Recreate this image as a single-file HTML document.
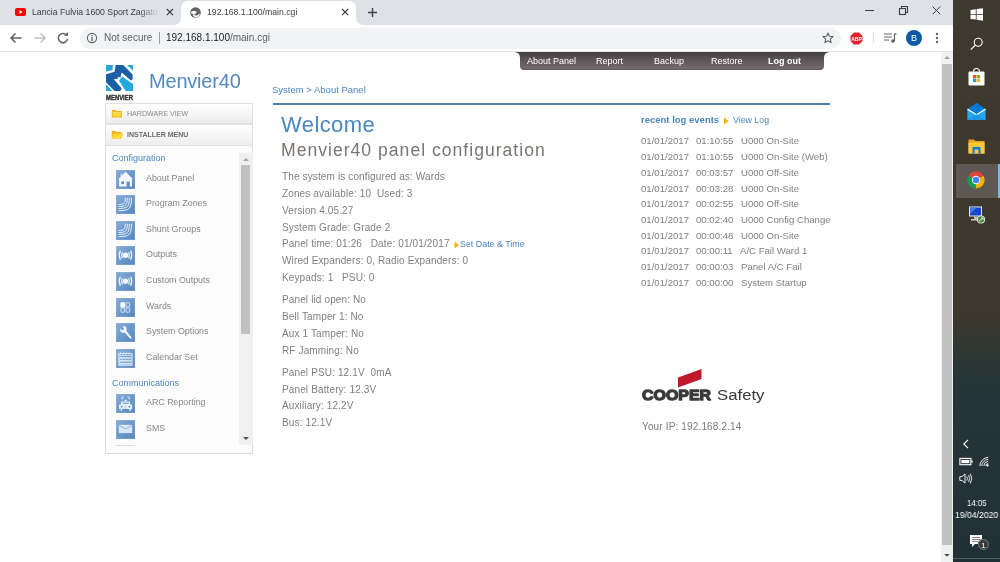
<!DOCTYPE html>
<html><head><meta charset="utf-8">
<style>
*{margin:0;padding:0;box-sizing:border-box}
html,body{width:1000px;height:562px;overflow:hidden;background:#fff;font-family:"Liberation Sans",sans-serif;-webkit-font-smoothing:antialiased}
.a{position:absolute;white-space:pre;will-change:transform}
#tabs{position:absolute;left:0;top:0;width:953px;height:25px;background:#dee1e6}
#toolbar{position:absolute;left:0;top:25px;width:953px;height:26px;background:#fff}
#tbline{position:absolute;left:0;top:51px;width:953px;height:1px;background:#e3e3e3}
#omni{position:absolute;left:80px;top:28px;width:761px;height:20.5px;border-radius:10.25px;background:#f1f3f4}
#taskbar{position:absolute;left:953px;top:0;width:47px;height:562px;background:linear-gradient(to bottom,#3f382e 0px,#3d372d 310px,#2f3733 350px,#253538 385px,#203035 562px)}
#vscroll{position:absolute;left:941px;top:52px;width:12px;height:510px;background:#f1f1f1}
.txt{color:#808080;font-size:10px;letter-spacing:0.13px}
.nav{color:#fff;font-size:9px;top:55.5px}
.side{color:#858585;font-size:8.85px}
.ico{position:absolute;left:116px;width:20px;height:19px;background:linear-gradient(135deg,#6f9fd0 0%,#5a8cc2 60%,#4a7fb8 100%)}
.log{color:#808080;font-size:9.6px}
</style></head><body>
<!-- ===== Chrome tab strip ===== -->
<div id="tabs"></div>
<!-- active tab -->
<div style="position:absolute;left:181px;top:1px;width:175px;height:25px;background:#fff;border-radius:7px 7px 0 0"></div>
<svg class="a" style="left:0;top:0" width="953" height="26">
  <path d="M173 25 Q181 25 181 17 L181 25 Z" fill="#fff"/>
  <path d="M364 25 Q356 25 356 17 L356 25 Z" fill="#fff"/>
</svg>
<!-- youtube icon -->
<div class="a" style="left:15px;top:8px;width:11px;height:8px;background:#f00;border-radius:2px"></div>
<svg class="a" style="left:15px;top:8px" width="11" height="8"><path d="M4.5 2 L7.5 4 L4.5 6 Z" fill="#fff"/></svg>
<div class="a" style="left:32px;top:6.5px;width:127px;overflow:hidden;font-size:8.7px;color:#3c4043;-webkit-mask-image:linear-gradient(to right,#000 85%,transparent)">Lancia Fulvia 1600 Sport Zagato.</div>
<svg class="a" style="left:166px;top:8px" width="8" height="8"><path d="M0.8 1 L7 7.2 M7 1 L0.8 7.2" stroke="#3c4043" stroke-width="1.2"/></svg>
<!-- globe -->
<svg class="a" style="left:190px;top:7px" width="11" height="11" viewBox="0 0 11 11"><circle cx="5.5" cy="5.5" r="5.3" fill="#5f6368"/><path d="M1 5.2 Q2.5 3.6 4.6 3.9 Q6.8 4.2 6.6 5.6 Q6.3 6.6 5 6.7 Q3.9 6.9 4.6 7.9 Q5.6 8.9 7.4 8.2 Q8.8 7.5 9.9 6.6 Q9.8 8.9 7.6 10.1 Q5.2 10.9 3.8 9.6 Q2.6 8.4 3.2 7 Q2.2 6.5 1 6.2 Z" fill="#fff"/></svg>
<div class="a" style="left:207px;top:6.5px;font-size:8.7px;color:#3c4043">192.168.1.100/main.cgi</div>
<svg class="a" style="left:341px;top:8px" width="8" height="8"><path d="M1 1 L7.2 7.2 M7.2 1 L1 7.2" stroke="#3c4043" stroke-width="1.2"/></svg>
<svg class="a" style="left:367px;top:7px" width="11" height="11"><path d="M5.5 1 V10 M1 5.5 H10" stroke="#3c4043" stroke-width="1.4"/></svg>
<!-- window controls -->
<div class="a" style="left:865px;top:10px;width:9px;height:1px;background:#3c4043"></div>
<svg class="a" style="left:898px;top:5px" width="11" height="11"><rect x="1.5" y="3.5" width="6" height="6" fill="none" stroke="#3c4043" stroke-width="1.1"/><path d="M3.5 3.5 V1.5 H9.5 V7.5 H7.5" fill="none" stroke="#3c4043" stroke-width="1.1"/></svg>
<svg class="a" style="left:932px;top:6px" width="9" height="9"><path d="M0.5 0.5 L8.3 8.3 M8.3 0.5 L0.5 8.3" stroke="#3c4043" stroke-width="1"/></svg>

<!-- ===== toolbar ===== -->
<div id="toolbar"></div>
<div id="tbline"></div>
<svg class="a" style="left:9px;top:32px" width="14" height="12"><path d="M12.5 6 H2 M6.5 1.5 L2 6 L6.5 10.5" fill="none" stroke="#5f6368" stroke-width="1.5"/></svg>
<svg class="a" style="left:33px;top:32px" width="14" height="12"><path d="M1.5 6 H12 M7.5 1.5 L12 6 L7.5 10.5" fill="none" stroke="#bdc1c6" stroke-width="1.5"/></svg>
<svg class="a" style="left:57px;top:32px" width="12" height="12"><path d="M9.8 3.5 A4.6 4.6 0 1 0 10.5 7" fill="none" stroke="#5f6368" stroke-width="1.5"/><path d="M7 3.8 L11 3.8 L11 0 Z" fill="#5f6368"/></svg>
<div id="omni"></div>
<svg class="a" style="left:86px;top:32px" width="12" height="12"><circle cx="6" cy="6" r="4.6" fill="none" stroke="#5f6368" stroke-width="1.1"/><rect x="5.4" y="5" width="1.3" height="4" fill="#5f6368"/><rect x="5.4" y="3" width="1.3" height="1.2" fill="#5f6368"/></svg>
<div class="a" style="left:104px;top:32px;font-size:10px;color:#5f6368">Not secure</div>
<div class="a" style="left:159px;top:32px;width:1px;height:12px;background:#9aa0a6"></div>
<div class="a" style="left:166px;top:32px;font-size:10px;color:#202124">192.168.1.100<span style="color:#5f6368">/main.cgi</span></div>
<svg class="a" style="left:822px;top:32px" width="12" height="12"><path d="M6 1 L7.4 4.3 L11 4.6 L8.3 7 L9.1 10.6 L6 8.7 L2.9 10.6 L3.7 7 L1 4.6 L4.6 4.3 Z" fill="none" stroke="#5f6368" stroke-width="1.1" stroke-linejoin="round"/></svg>
<svg class="a" style="left:850px;top:32px" width="13" height="13"><path d="M4 0.5 H9 L12.5 4 V9 L9 12.5 H4 L0.5 9 V4 Z" fill="#e0262c"/><text x="6.5" y="8.5" font-size="5" font-weight="bold" fill="#fff" text-anchor="middle" font-family="Liberation Sans">ABP</text></svg>
<div class="a" style="left:873px;top:33px;width:1px;height:10px;background:#dadce0"></div>
<svg class="a" style="left:884px;top:33px" width="13" height="10"><path d="M0 1 H8 M0 4 H8 M0 7 H5" stroke="#5f6368" stroke-width="1.2"/><path d="M10.5 0.5 V8 M10.5 0.8 L12.5 0.8" stroke="#5f6368" stroke-width="1.2"/><circle cx="9" cy="8" r="1.8" fill="#5f6368"/></svg>
<div class="a" style="left:905.5px;top:30px;width:16.2px;height:16.2px;border-radius:50%;background:#0f5aa6"></div>
<div class="a" style="left:910.5px;top:32.8px;font-size:9px;color:#fff">B</div>
<svg class="a" style="left:935px;top:32px" width="4" height="12"><circle cx="2" cy="2" r="1.2" fill="#5f6368"/><circle cx="2" cy="6" r="1.2" fill="#5f6368"/><circle cx="2" cy="10" r="1.2" fill="#5f6368"/></svg>


<!-- ===== PAGE ===== -->
<!-- top nav -->
<svg class="a" style="left:514px;top:51px" width="316" height="20">
  <defs><linearGradient id="ng" x1="0" y1="0" x2="0" y2="1"><stop offset="0" stop-color="#433c3e"/><stop offset="0.08" stop-color="#4a4345"/><stop offset="0.9" stop-color="#736a6b"/><stop offset="1" stop-color="#5f5759"/></linearGradient></defs>
  <path d="M0 1 Q6 1 6 7 L6 15 Q6 19 10 19 L306 19 Q310 19 310 15 L310 7 Q310 1 316 1 Z" fill="url(#ng)"/>
</svg>
<div class="a nav" style="left:527px">About Panel</div>
<div class="a nav" style="left:596px">Report</div>
<div class="a nav" style="left:654px">Backup</div>
<div class="a nav" style="left:711px">Restore</div>
<div class="a nav" style="left:768px;font-weight:bold">Log out</div>

<!-- logo -->
<svg class="a" style="left:106px;top:65px" width="27" height="26" viewBox="0 0 27 26">
  <g fill="#22a9de">
    <path d="M0 0 L7.1 0 L6.4 5.3 L0 6.4 Z"/>
    <path d="M21 0 L27 0 L27 5.8 Z"/>
    <path d="M0 19.3 L0 26 L6.4 26 Z"/>
    <path d="M13 15.4 L16.2 11.6 L27 19 L27 26 L19.6 26 Z"/>
  </g>
  <path d="M9.6 0 L17.2 0 L26.6 9.4 L26.6 14.2 L25 15.4 L15.6 7.4 L14.4 12.6 L11.6 11.8 L12.4 13.6 L7.8 14.2 L15.6 23.2 L15.2 25 L14 26 L8.6 26 L0 17.2 L0 9.3 L8.6 6.8 Z" fill="#1d5fa7"/>
</svg>
<svg class="a" style="left:105px;top:93px" width="29" height="8"><text x="1" y="6.7" font-size="6.6" font-weight="bold" fill="#2e2e2e" font-family="Liberation Sans" textLength="27" lengthAdjust="spacingAndGlyphs" stroke="#2e2e2e" stroke-width="0.35">MENVIER</text></svg>
<div class="a" style="left:148.5px;top:70px;font-size:20px;letter-spacing:-0.2px;color:#5089c4">Menvier40</div>

<!-- sidebar -->
<div class="a" style="left:105px;top:103px;width:148px;height:351px;border:1px solid #dcdcdc;background:#fcfcfc"></div>
<div class="a" style="left:105px;top:103px;width:148px;height:21px;border:1px solid #e0e0e0;background:linear-gradient(#ffffff,#ededed)"></div>
<div class="a" style="left:105px;top:124px;width:148px;height:22px;border:1px solid #e0e0e0;background:linear-gradient(#ffffff,#ededed)"></div>
<svg class="a" style="left:111px;top:109px" width="12" height="10"><defs><linearGradient id="fg" x1="0" y1="0" x2="0" y2="1"><stop offset="0" stop-color="#ffd866"/><stop offset="1" stop-color="#f9d11a"/></linearGradient></defs><path d="M0.8 1 H4.5 L5.5 2 H10.8 V8.6 H0.8 Z" fill="#f1ac1e"/><path d="M1.6 2.8 H10 V7.8 H1.6 Z" fill="url(#fg)"/><path d="M3 7.6 Q6 4.5 9.5 7.6 Z" fill="#f7e326" opacity="0.7"/></svg>
<div class="a" style="left:127px;top:109.5px;font-size:7.1px;color:#8a8a8a">HARDWARE VIEW</div>
<svg class="a" style="left:111px;top:130px" width="13" height="10"><path d="M0.8 1 H4.5 L5.5 2 H10.5 V8.6 H0.8 Z" fill="#f1ac1e"/><path d="M2.2 3.6 H12.3 L10.4 8.6 H0.8 Z" fill="#fcd53a"/><path d="M3 7.8 Q6 5 10 7.8 Z" fill="#f4ee36" opacity="0.8"/></svg>
<div class="a" style="left:127px;top:130.5px;font-size:7px;font-weight:bold;color:#6a6a6a">INSTALLER MENU</div>

<div class="a" style="left:238.5px;top:153px;width:13.5px;height:292px;background:#f0f0f0"></div>
<svg class="a" style="left:239.5px;top:153px" width="12" height="12"><path d="M3 8 L6 5 L9 8 Z" fill="#a3a3a3"/></svg>
<div class="a" style="left:241px;top:165px;width:9px;height:169px;background:#c1c1c1"></div>
<svg class="a" style="left:239.5px;top:433px" width="12" height="12"><path d="M3 4 L6 7 L9 4 Z" fill="#505050"/></svg>

<div class="a" style="left:112px;top:153px;font-size:9px;color:#4a86c0">Configuration</div>
<svg width="0" height="0" style="position:absolute"><defs><linearGradient id="ig" x1="0" y1="0" x2="1" y2="1"><stop offset="0" stop-color="#86add8"/><stop offset="0.5" stop-color="#6c99cb"/><stop offset="1" stop-color="#5585be"/></linearGradient></defs></svg>
<svg class="a" style="left:116.2px;top:169.6px" width="19.4" height="19.2" viewBox="0 0 19.4 19.2"><rect width="19.4" height="19.2" fill="url(#ig)"/><rect x="0.5" y="0.5" width="18.4" height="18.2" fill="none" stroke="#9fc0e3" stroke-width="0.6" opacity="0.5"/><path d="M9.6 1.8 L16.8 9 L16 9.8 L16 16.6 L13.9 16.6 L13.9 11.4 L10.6 11.4 L10.6 16.6 L3.1 16.6 L3.1 9.8 L2.4 9 L4.7 6.7 L4.7 3.5 L5.7 3.5 L5.7 5.7 Z" fill="#f4f8fc"/><rect x="5.3" y="11.4" width="2.7" height="2.7" fill="#5e8fc4"/></svg>
<div class="a side" style="left:146px;top:172.6px">About Panel</div>
<svg class="a" style="left:116.2px;top:195.2px" width="19.4" height="19.2" viewBox="0 0 19.4 19.2"><rect width="19.4" height="19.2" fill="url(#ig)"/><rect x="0.5" y="0.5" width="18.4" height="18.2" fill="none" stroke="#9fc0e3" stroke-width="0.6" opacity="0.5"/><g fill="none" stroke="#f4f8fc" stroke-width="1" opacity="0.9"><path d="M2.5 9.5 C 8.3 9.5 9.3 8.5 9.3 2.7"/><path d="M2.5 11.5 C 10.0 11.5 11.3 10.2 11.3 2.7"/><path d="M2.5 13.5 C 11.7 13.5 13.3 11.9 13.3 2.7"/><path d="M2.5 15.7 C 13.5 15.7 15.5 13.8 15.5 2.7"/></g></svg>
<div class="a side" style="left:146px;top:198.2px">Program Zones</div>
<svg class="a" style="left:116.2px;top:220.8px" width="19.4" height="19.2" viewBox="0 0 19.4 19.2"><rect width="19.4" height="19.2" fill="url(#ig)"/><rect x="0.5" y="0.5" width="18.4" height="18.2" fill="none" stroke="#9fc0e3" stroke-width="0.6" opacity="0.5"/><g fill="none" stroke="#f4f8fc" stroke-width="1" opacity="0.9"><path d="M2.5 9.5 C 8.3 9.5 9.3 8.5 9.3 2.7"/><path d="M2.5 11.5 C 10.0 11.5 11.3 10.2 11.3 2.7"/><path d="M2.5 13.5 C 11.7 13.5 13.3 11.9 13.3 2.7"/><path d="M2.5 15.7 C 13.5 15.7 15.5 13.8 15.5 2.7"/></g></svg>
<div class="a side" style="left:146px;top:223.8px">Shunt Groups</div>
<svg class="a" style="left:116.2px;top:246.4px" width="19.4" height="19.2" viewBox="0 0 19.4 19.2"><rect width="19.4" height="19.2" fill="url(#ig)"/><rect x="0.5" y="0.5" width="18.4" height="18.2" fill="none" stroke="#9fc0e3" stroke-width="0.6" opacity="0.5"/><circle cx="9.5" cy="9.3" r="2.7" fill="#f4f8fc"/><g fill="none" stroke="#f4f8fc" stroke-width="1.2" stroke-linecap="round"><path d="M6.2 6.6 Q5.2 9.3 6.2 12"/><path d="M12.8 6.6 Q13.8 9.3 12.8 12"/><path d="M4.2 5.1 Q2.4 9.3 4.2 13.5"/><path d="M14.8 5.1 Q16.6 9.3 14.8 13.5"/></g></svg>
<div class="a side" style="left:146px;top:249.4px">Outputs</div>
<svg class="a" style="left:116.2px;top:272.0px" width="19.4" height="19.2" viewBox="0 0 19.4 19.2"><rect width="19.4" height="19.2" fill="url(#ig)"/><rect x="0.5" y="0.5" width="18.4" height="18.2" fill="none" stroke="#9fc0e3" stroke-width="0.6" opacity="0.5"/><circle cx="9.5" cy="9.3" r="2.7" fill="#f4f8fc"/><g fill="none" stroke="#f4f8fc" stroke-width="1.2" stroke-linecap="round"><path d="M6.2 6.6 Q5.2 9.3 6.2 12"/><path d="M12.8 6.6 Q13.8 9.3 12.8 12"/><path d="M4.2 5.1 Q2.4 9.3 4.2 13.5"/><path d="M14.8 5.1 Q16.6 9.3 14.8 13.5"/></g></svg>
<div class="a side" style="left:146px;top:275.0px">Custom Outputs</div>
<svg class="a" style="left:116.2px;top:297.6px" width="19.4" height="19.2" viewBox="0 0 19.4 19.2"><rect width="19.4" height="19.2" fill="url(#ig)"/><rect x="0.5" y="0.5" width="18.4" height="18.2" fill="none" stroke="#9fc0e3" stroke-width="0.6" opacity="0.5"/><g fill="none" stroke="#f4f8fc" stroke-width="0.9" opacity="0.85"><rect x="5" y="4.8" width="3.6" height="4.2" rx="0.5"/><rect x="10" y="4.8" width="3.6" height="4.2" rx="0.5"/><rect x="5" y="10" width="3.6" height="4.2" rx="0.5"/><rect x="10" y="10" width="3.6" height="4.2" rx="0.5"/></g><rect x="4.6" y="4.4" width="4.4" height="5" fill="#f4f8fc"/></svg>
<div class="a side" style="left:146px;top:300.6px">Wards</div>
<svg class="a" style="left:116.2px;top:323.2px" width="19.4" height="19.2" viewBox="0 0 19.4 19.2"><rect width="19.4" height="19.2" fill="url(#ig)"/><rect x="0.5" y="0.5" width="18.4" height="18.2" fill="none" stroke="#9fc0e3" stroke-width="0.6" opacity="0.5"/><path d="M4.2 5.5 L6 7.2 L7.6 6.8 L8 5.2 L6.3 3.5 Q9.2 2.6 10.3 4.6 Q11 6.2 10.2 7.8 L15.6 14.2 Q15.8 15.8 14.4 15.8 L8.6 9.6 Q6.8 10.2 5.3 9.3 Q3.7 8 4.2 5.5 Z" fill="#f4f8fc"/></svg>
<div class="a side" style="left:146px;top:326.2px">System Options</div>
<svg class="a" style="left:116.2px;top:348.8px" width="19.4" height="19.2" viewBox="0 0 19.4 19.2"><rect width="19.4" height="19.2" fill="url(#ig)"/><rect x="0.5" y="0.5" width="18.4" height="18.2" fill="none" stroke="#9fc0e3" stroke-width="0.6" opacity="0.5"/><rect x="2.7" y="4.6" width="13.4" height="11.8" fill="none" stroke="#f4f8fc" stroke-width="1" opacity="0.8"/><rect x="2.7" y="6.2" width="13.4" height="0.9" fill="#f4f8fc" opacity="0.8"/><g fill="#f4f8fc"><rect x="3.9" y="8.2" width="2" height="1.5"/><rect x="6.8" y="8.2" width="2" height="1.5"/><rect x="9.7" y="8.2" width="2" height="1.5"/><rect x="12.7" y="8.2" width="2" height="1.5"/><rect x="3.9" y="11.1" width="2" height="1.5"/><rect x="6.8" y="11.1" width="2" height="1.5"/><rect x="9.7" y="11.1" width="2" height="1.5"/><rect x="12.7" y="11.1" width="2" height="1.5"/><rect x="3.9" y="14" width="2" height="1.5"/><rect x="6.8" y="14" width="2" height="1.5"/><rect x="9.7" y="14" width="2" height="1.5"/><rect x="12.7" y="14" width="2" height="1.5"/></g><g fill="none" stroke="#f4f8fc" stroke-width="0.8" opacity="0.8"><path d="M4.2 5.6 Q3.8 3 5.2 2.8 M7.1 5.6 Q6.7 3 8.1 2.8 M10 5.6 Q9.6 3 11 2.8 M13 5.6 Q12.6 3 14 2.8"/><path d="M3.6 8.2 V16 M6.4 8.2 V16 M9.3 8.2 V16 M12.2 8.2 V16 M15.2 8.2 V16"/></g></svg>
<div class="a side" style="left:146px;top:351.8px">Calendar Set</div>
<svg class="a" style="left:116.2px;top:394.4px" width="19.4" height="19.2" viewBox="0 0 19.4 19.2"><rect width="19.4" height="19.2" fill="url(#ig)"/><rect x="0.5" y="0.5" width="18.4" height="18.2" fill="none" stroke="#9fc0e3" stroke-width="0.6" opacity="0.5"/><path d="M5.1 10.4 L5.1 8.2 Q5.1 7.6 5.8 7.6 L13.4 7.6 Q14.1 7.6 14.1 8.2 L14.1 10.4 L15.4 10.4 Q16.1 10.6 16.1 11.4 L16.1 14.4 Q16.1 15.1 15.4 15.1 L14.7 15.1 L14.7 16.8 L13.3 16.8 L13.3 15.1 L6 15.1 L6 16.8 L4.7 16.8 L4.7 15.1 L3.8 15.1 Q3.1 15.1 3.1 14.4 L3.1 11.4 Q3.1 10.6 3.8 10.4 Z" fill="#f4f8fc"/><rect x="6.5" y="8.6" width="6.5" height="1.2" fill="#6b9acb"/><circle cx="5.7" cy="12.7" r="1.1" fill="#6b9acb"/><circle cx="13.5" cy="12.7" r="1.1" fill="#6b9acb"/><path d="M8.3 11.8 H10.9 M8.3 13 H10.9 M8.3 14.2 H10.9" stroke="#8fb3d9" stroke-width="0.5"/><rect x="8.8" y="5.7" width="1.8" height="1.6" fill="#f4f8fc"/><g fill="none" stroke="#f4f8fc" stroke-width="0.8" opacity="0.8"><path d="M5.4 5.2 Q5.2 2.6 7.6 2.3 M6.4 5.4 Q6.6 3.6 7.8 3.6"/><path d="M13.9 5.2 Q14.1 2.6 11.7 2.3 M12.9 5.4 Q12.7 3.6 11.5 3.6"/></g></svg>
<div class="a side" style="left:146px;top:397.4px">ARC Reporting</div>
<svg class="a" style="left:116.2px;top:420.0px" width="19.4" height="19.2" viewBox="0 0 19.4 19.2"><rect width="19.4" height="19.2" fill="url(#ig)"/><rect x="0.5" y="0.5" width="18.4" height="18.2" fill="none" stroke="#9fc0e3" stroke-width="0.6" opacity="0.5"/><rect x="2.8" y="4.8" width="13.4" height="8.3" fill="#d9e6f3"/><path d="M3.2 5.6 L9.5 8.9 L15.8 5.6" fill="none" stroke="#8db0d6" stroke-width="1"/></svg>
<div class="a side" style="left:146px;top:423.0px">SMS</div>
<div class="a" style="left:112px;top:378px;font-size:9px;color:#4a86c0">Communications</div>
<div class="a" style="left:116.2px;top:445px;width:19.4px;height:1px;background:#cfe0f0"></div>

<!-- breadcrumb -->
<div class="a" style="left:272px;top:84px;font-size:9.5px;color:#4a86c0">System &gt; About Panel</div>
<div class="a" style="left:273px;top:103px;width:557px;height:2px;background:#4a7fb5"></div>

<div class="a" style="left:281px;top:112px;font-size:22px;color:#4a86c0;letter-spacing:0.4px">Welcome</div>
<div class="a" style="left:281px;top:140px;font-size:17.6px;color:#7a7572;letter-spacing:1px">Menvier40 panel configuration</div>
<div class="a txt" style="left:281.5px;top:171.1px">The system is configured as: Wards</div>
<div class="a txt" style="left:281.5px;top:187.9px">Zones available: 10  Used: 3</div>
<div class="a txt" style="left:281.5px;top:204.7px">Version 4.05.27</div>
<div class="a txt" style="left:281.5px;top:221.5px">System Grade: Grade 2</div>
<div class="a txt" style="left:281.5px;top:238.3px">Panel time: 01:26   Date: 01/01/2017</div>
<div class="a txt" style="left:281.5px;top:255.1px">Wired Expanders: 0, Radio Expanders: 0</div>
<div class="a txt" style="left:281.5px;top:271.9px">Keypads: 1   PSU: 0</div>
<div class="a txt" style="left:281.5px;top:294.2px">Panel lid open: No</div>
<div class="a txt" style="left:281.5px;top:311.0px">Bell Tamper 1: No</div>
<div class="a txt" style="left:281.5px;top:327.8px">Aux 1 Tamper: No</div>
<div class="a txt" style="left:281.5px;top:344.6px">RF Jamming: No</div>
<div class="a txt" style="left:281.5px;top:366.8px">Panel PSU: 12.1V  0mA</div>
<div class="a txt" style="left:281.5px;top:383.6px">Panel Battery: 12.3V</div>
<div class="a txt" style="left:281.5px;top:400.4px">Auxiliary: 12.2V</div>
<div class="a txt" style="left:281.5px;top:417.2px">Bus: 12.1V</div>
<svg class="a" style="left:454px;top:241px" width="6" height="8"><path d="M0.5 0.5 L5 4 L0.5 7.5 Z" fill="#f3b300"/></svg>
<div class="a" style="left:460px;top:239px;font-size:8.9px;color:#4a80c2">Set Date &amp; Time</div>
<div class="a" style="left:641px;top:114px;font-size:9.5px;font-weight:bold;color:#4a86c0">recent log events</div>
<svg class="a" style="left:724px;top:117px" width="5" height="8"><path d="M0 0.5 L4.5 4 L0 7.5 Z" fill="#f3b300"/></svg>
<div class="a" style="left:733px;top:115px;font-size:8.8px;color:#4a86c0">View Log</div>
<div class="a log" style="left:641px;top:135.4px">01/01/2017</div><div class="a log" style="left:696px;top:135.4px">01:10:55</div><div class="a log" style="left:741.1px;top:135.4px">U000 On-Site</div>
<div class="a log" style="left:641px;top:151.1px">01/01/2017</div><div class="a log" style="left:696px;top:151.1px">01:10:55</div><div class="a log" style="left:741.1px;top:151.1px">U000 On-Site (Web)</div>
<div class="a log" style="left:641px;top:166.8px">01/01/2017</div><div class="a log" style="left:696px;top:166.8px">00:03:57</div><div class="a log" style="left:741.1px;top:166.8px">U000 Off-Site</div>
<div class="a log" style="left:641px;top:182.5px">01/01/2017</div><div class="a log" style="left:696px;top:182.5px">00:03:28</div><div class="a log" style="left:741.1px;top:182.5px">U000 On-Site</div>
<div class="a log" style="left:641px;top:198.2px">01/01/2017</div><div class="a log" style="left:696px;top:198.2px">00:02:55</div><div class="a log" style="left:741.1px;top:198.2px">U000 Off-Site</div>
<div class="a log" style="left:641px;top:213.8px">01/01/2017</div><div class="a log" style="left:696px;top:213.8px">00:02:40</div><div class="a log" style="left:741.1px;top:213.8px">U000 Config Change</div>
<div class="a log" style="left:641px;top:229.5px">01/01/2017</div><div class="a log" style="left:696px;top:229.5px">00:00:48</div><div class="a log" style="left:741.1px;top:229.5px">U000 On-Site</div>
<div class="a log" style="left:641px;top:245.2px">01/01/2017</div><div class="a log" style="left:696px;top:245.2px">00:00:11</div><div class="a log" style="left:739.7px;top:245.2px">A/C Fail Ward 1</div>
<div class="a log" style="left:641px;top:260.9px">01/01/2017</div><div class="a log" style="left:696px;top:260.9px">00:00:03</div><div class="a log" style="left:741.1px;top:260.9px">Panel A/C Fail</div>
<div class="a log" style="left:641px;top:276.6px">01/01/2017</div><div class="a log" style="left:696px;top:276.6px">00:00:00</div><div class="a log" style="left:741.1px;top:276.6px">System Startup</div>

<!-- cooper logo -->
<svg class="a" style="left:640px;top:368px" width="130" height="40">
  <path d="M38 9.6 L61.5 1 L61.5 11 L38 19.4 Z" fill="#c0182b"/>
  <text x="2" y="32" font-size="15.5" font-weight="bold" fill="#3a3a3a" font-family="Liberation Sans" textLength="69" lengthAdjust="spacingAndGlyphs" stroke="#3a3a3a" stroke-width="1.3" stroke-linejoin="round">COOPER</text>
  <text x="77" y="32" font-size="15.5" fill="#3a3a3a" font-family="Liberation Sans" textLength="47.5" lengthAdjust="spacingAndGlyphs">Safety</text>
</svg>
<div class="a" style="left:642px;top:421px;font-size:10px;letter-spacing:0.15px;color:#7b7b7b">Your IP: 192.168.2.14</div>

<!-- ===== browser scrollbar ===== -->
<div id="vscroll"></div>
<svg class="a" style="left:941px;top:51px" width="12" height="12"><path d="M3 8 L6 5 L9 8 Z" fill="#a3a3a3"/></svg>
<div class="a" style="left:942px;top:64px;width:9.5px;height:481px;background:#c1c1c1"></div>
<svg class="a" style="left:941px;top:551px" width="12" height="8"><path d="M3.2 3 L6 5.8 L8.8 3 Z" fill="#505050"/></svg>

<!-- ===== taskbar ===== -->
<div id="taskbar"></div>
<!-- taskbar icons -->
<svg class="a" style="left:970px;top:8px" width="14" height="13"><path d="M0.5 2 L5.8 1.2 V6 H0.5 Z M6.6 1.1 L13 0.2 V6 H6.6 Z M0.5 6.8 H5.8 V11.6 L0.5 10.9 Z M6.6 6.8 H13 V12.7 L6.6 11.8 Z" fill="#fff"/></svg>
<svg class="a" style="left:970px;top:37px" width="14" height="14"><circle cx="8.2" cy="5.3" r="4" fill="none" stroke="#fff" stroke-width="1.1"/><path d="M5.3 8.2 L0.8 12.7" stroke="#fff" stroke-width="1.2"/></svg>
<svg class="a" style="left:967px;top:67px" width="19" height="20"><path d="M6.5 4.5 Q6.5 1.5 9.5 1.5 Q12.5 1.5 12.5 4.5" fill="none" stroke="#fff" stroke-width="1.1"/><rect x="1.5" y="4.5" width="16" height="14" rx="1" fill="#fff"/><rect x="6" y="8" width="3.3" height="3.3" fill="#f25022"/><rect x="9.8" y="8" width="3.3" height="3.3" fill="#7fba00"/><rect x="6" y="11.8" width="3.3" height="3.3" fill="#00a4ef"/><rect x="9.8" y="11.8" width="3.3" height="3.3" fill="#ffb900"/></svg>
<svg class="a" style="left:967px;top:102px" width="20" height="19"><path d="M0.5 7 L9.5 0.8 L18.5 7 V18 H0.5 Z" fill="#0078d4"/><path d="M0.5 7 L9.5 12.5 L18.5 7 V18 H0.5 Z" fill="#28a8ea"/><path d="M0.5 7.2 L9.5 12.8 L18.5 7.2" fill="none" stroke="#e8f4fc" stroke-width="1.4"/><path d="M0.5 18 L9.5 12 L18.5 18 Z" fill="#1490df" opacity="0.6"/></svg>
<svg class="a" style="left:968px;top:139px" width="17" height="15"><path d="M0.5 0.5 H6 L7.5 2 H16.5 V14.5 H0.5 Z" fill="#e8a317"/><rect x="0.5" y="3.5" width="16" height="11" fill="#ffc83d"/><rect x="4.5" y="8" width="8" height="6.5" fill="#0f78d4"/><rect x="6.5" y="10.5" width="4" height="4" fill="#ffc83d"/></svg>
<div class="a" style="left:956px;top:163.5px;width:44px;height:33.5px;background:#5d5851"></div>
<div class="a" style="left:998px;top:163.5px;width:2px;height:33.5px;background:#76b9ed"></div>
<svg class="a" style="left:967px;top:171px" width="18" height="18" viewBox="0 0 18 18"><circle cx="9" cy="9" r="8.5" fill="#db4437"/><path d="M9 9 L1.6 4.8 A8.5 8.5 0 0 0 9 17.5 Z" fill="#0f9d58"/><path d="M9 9 L9 17.5 A8.5 8.5 0 0 0 16.4 4.8 Z" fill="#f4b400"/><path d="M9 9 L16.4 4.8 A8.5 8.5 0 0 0 1.6 4.8 Z" fill="#db4437"/><circle cx="9" cy="9" r="4.2" fill="#fff"/><circle cx="9" cy="9" r="3.3" fill="#4285f4"/></svg>
<svg class="a" style="left:968px;top:206px" width="18" height="18"><rect x="1" y="0.5" width="13" height="10" fill="#e6e6e6"/><rect x="2" y="1.5" width="11" height="8" fill="#1446c8"/><path d="M2 1.5 L9 1.5 L2 8 Z" fill="#3b78f0"/><rect x="6" y="10.5" width="3" height="2.5" fill="#bbb"/><rect x="3" y="13" width="9" height="1.5" fill="#ccc"/><circle cx="13" cy="13.5" r="4" fill="#fff"/><circle cx="13" cy="13.5" r="3.2" fill="#4a8a3c"/><path d="M11 15 L15 12 M13.2 12 H15 V13.8" stroke="#fff" stroke-width="0.8" fill="none"/></svg>

<svg class="a" style="left:962px;top:439px" width="8" height="10"><path d="M6 0.8 L1.8 5 L6 9.2" fill="none" stroke="#fff" stroke-width="1.1"/></svg>
<svg class="a" style="left:959px;top:457px" width="14" height="9"><rect x="0.9" y="1.4" width="11" height="6.3" fill="none" stroke="#fff" stroke-width="1.1"/><rect x="2.4" y="2.9" width="8" height="3.3" fill="#fff"/><rect x="12.4" y="3.4" width="1.2" height="2.3" fill="#fff"/></svg>
<svg class="a" style="left:979px;top:456px" width="10" height="11"><g fill="none" stroke="#fff" stroke-width="0.9"><path d="M0.8 10 A9 9 0 0 1 9.2 1.3"/><path d="M2.8 10 A7 7 0 0 1 9.2 3.3" /><path d="M4.8 10 A5 5 0 0 1 9.2 5.3"/><path d="M6.8 10 A3 3 0 0 1 9.2 7.3"/></g><circle cx="8.6" cy="9.4" r="1.1" fill="#fff"/></svg>
<svg class="a" style="left:959px;top:473px" width="14" height="11"><path d="M0.8 3.6 H3 L6 0.9 V10.1 L3 7.4 H0.8 Z" fill="none" stroke="#fff" stroke-width="0.9"/><g fill="none" stroke="#fff" stroke-width="0.9"><path d="M7.8 3.5 Q9 5.5 7.8 7.5"/><path d="M9.6 2 Q11.6 5.5 9.6 9"/><path d="M11.4 0.6 Q14.1 5.5 11.4 10.4"/></g></svg>
<div class="a" style="left:967px;top:497.5px;font-size:9px;color:#fff;transform:scaleX(0.87);transform-origin:0 0">14:05</div>
<div class="a" style="left:955px;top:509.5px;font-size:9px;color:#fff;transform:scaleX(0.96);transform-origin:0 0">19/04/2020</div>
<svg class="a" style="left:969px;top:534px" width="21" height="17"><path d="M1 1 H13 V10 H6 L3 13 V10 H1 Z" fill="#fff"/><path d="M3 3.5 H11 M3 5.5 H11 M3 7.5 H9" stroke="#555" stroke-width="0.7"/><circle cx="14.5" cy="10.5" r="5.8" fill="#1e2d31"/><circle cx="14.5" cy="10.5" r="5" fill="#3a3a3a" stroke="#aaa" stroke-width="0.6"/><text x="14.5" y="13.6" font-size="8" fill="#fff" text-anchor="middle" font-family="Liberation Sans">1</text></svg>
<div class="a" style="left:953px;top:558px;width:47px;height:1px;background:#52605f"></div>

</body></html>
